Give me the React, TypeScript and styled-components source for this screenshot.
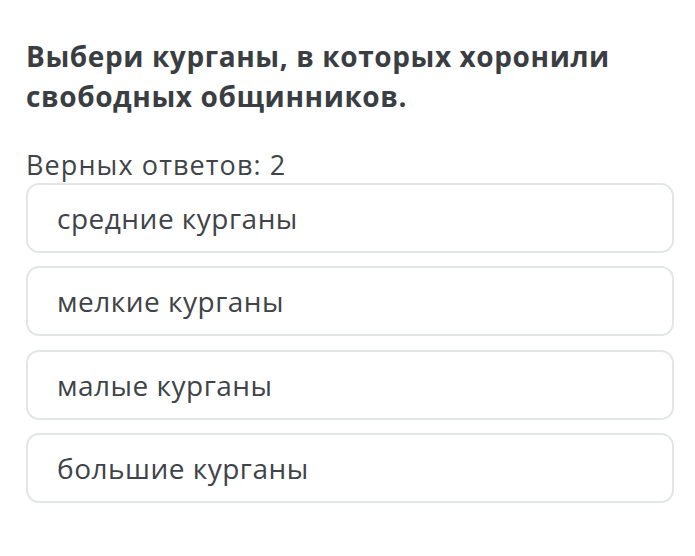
import React from "react";
import styled, { createGlobalStyle } from "styled-components";

const Global = createGlobalStyle`
  html, body { margin: 0; padding: 0; background: #ffffff; }
  body { font-family: "Open Sans", "Noto Sans", sans-serif; }
`;

const Page = styled.div`
  width: 695px;
  height: 556px;
  box-sizing: border-box;
  padding: 36px 21px 0 26px;
  display: flex;
  flex-direction: column;
`;

const Title = styled.h1`
  margin: 0;
  font-size: 28px;
  line-height: 40px;
  font-weight: 700;
  letter-spacing: 0.6px;
  color: #3a3e42;
`;

const Hint = styled.div`
  margin-top: 31px;
  font-size: 27px;
  line-height: 36px;
  letter-spacing: 1.1px;
  color: #404448;
`;

const List = styled.div`
  display: flex;
  flex-direction: column;
  gap: 13.4px;
  margin-top: 0px;
`;

const Option = styled.div`
  height: 70px;
  box-sizing: border-box;
  border: 2px solid #e2e6e6;
  border-radius: 13px;
  background: #ffffff;
  display: flex;
  align-items: center;
  padding-left: 29px;
  font-size: 28px;
  letter-spacing: 0.5px;
  color: #404448;
`;

const options = ["средние курганы", "мелкие курганы", "малые курганы", "большие курганы"];

export default function App() {
  return (
    <>
      <Global />
      <Page>
        <Title>
          Выбери курганы, в которых хоронили
          <br />
          свободных общинников.
        </Title>
        <Hint>Верных ответов: 2</Hint>
        <List>
          {options.map((o) => (
            <Option key={o}>{o}</Option>
          ))}
        </List>
      </Page>
    </>
  );
}
